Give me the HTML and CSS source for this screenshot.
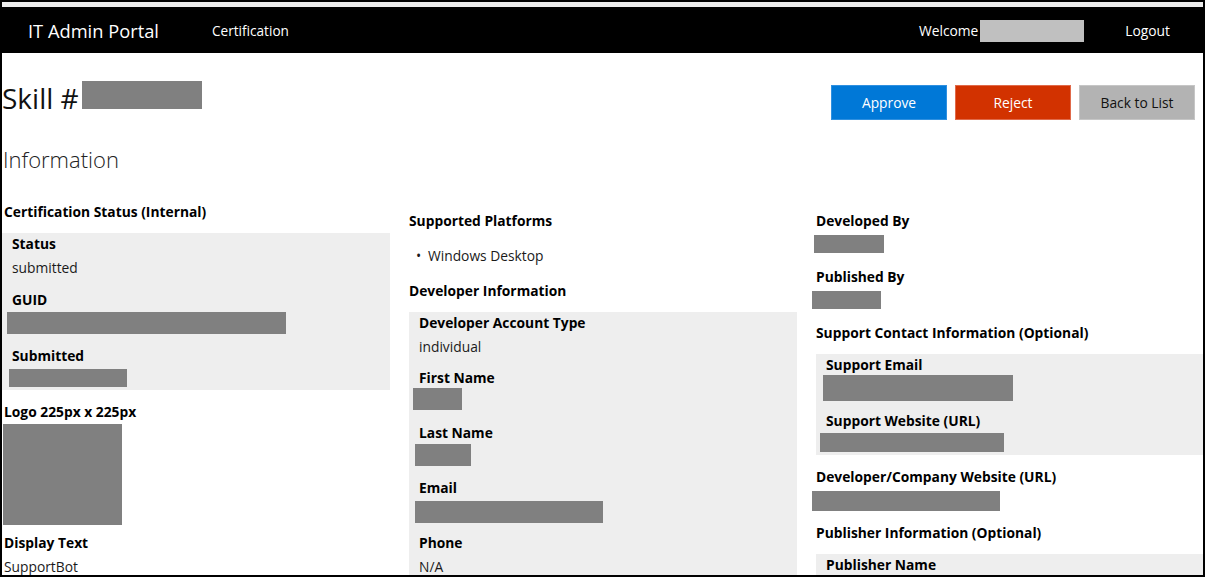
FILE: index.html
```html
<!DOCTYPE html>
<html lang="en">
<head>
<meta charset="utf-8">
<title>IT Admin Portal - Skill</title>
<link rel="stylesheet" href="styles.css">
</head>
<body>
<div class="frame">
  <div class="topstrip"></div>
  <nav class="navbar">
    <a class="brand">IT Admin Portal</a>
    <a class="navlink">Certification</a>
    <div class="navright">
      <span class="welcome">Welcome</span>
      <span class="userbox"></span>
      <a class="logout">Logout</a>
    </div>
  </nav>
  <main class="content">
    <div class="titlerow">
      <h1 class="title">Skill # <span class="redact r-title"></span></h1>
      <div class="actions">
        <button class="btn btn-approve">Approve</button>
        <button class="btn btn-reject">Reject</button>
        <button class="btn btn-back">Back to List</button>
      </div>
    </div>
    <h2 class="section-title">Information</h2>
    <div class="cols">
      <div class="col col-first">
        <div class="heading">Certification Status (Internal)</div>
        <div class="panel">
          <div class="field"><div class="label">Status</div><div class="value">submitted</div></div>
          <div class="field"><div class="label">GUID</div><div class="value"><span class="redact r-guid"></span></div></div>
          <div class="field"><div class="label">Submitted</div><div class="value"><span class="redact r-submitted"></span></div></div>
        </div>
        <div class="field">
          <div class="label">Logo 225px x 225px</div>
          <div class="logo"></div>
        </div>
        <div class="field field-tight"><div class="label">Display Text</div><div class="value">SupportBot</div></div>
      </div>
      <div class="col">
        <div class="heading">Supported Platforms</div>
        <ul class="platforms"><li>Windows Desktop</li></ul>
        <div class="heading heading-loose">Developer Information</div>
        <div class="panel panel-dense">
          <div class="field"><div class="label">Developer Account Type</div><div class="value">individual</div></div>
          <div class="field"><div class="label">First Name</div><div class="value"><span class="redact r-first"></span></div></div>
          <div class="field"><div class="label">Last Name</div><div class="value"><span class="redact r-last"></span></div></div>
          <div class="field"><div class="label">Email</div><div class="value"><span class="redact r-email"></span></div></div>
          <div class="field"><div class="label">Phone</div><div class="value">N/A</div></div>
        </div>
      </div>
      <div class="col">
        <div class="field"><div class="label">Developed By</div><div class="value"><span class="redact r-dev"></span></div></div>
        <div class="field"><div class="label">Published By</div><div class="value"><span class="redact r-pub"></span></div></div>
        <div class="heading">Support Contact Information (Optional)</div>
        <div class="panel">
          <div class="field"><div class="label">Support Email</div><div class="value"><span class="redact r-semail"></span></div></div>
          <div class="field"><div class="label">Support Website (URL)</div><div class="value"><span class="redact r-sweb"></span></div></div>
        </div>
        <div class="field"><div class="label">Developer/Company Website (URL)</div><div class="value"><span class="redact r-cweb"></span></div></div>
        <div class="heading">Publisher Information (Optional)</div>
        <div class="panel">
          <div class="field"><div class="label">Publisher Name</div><div class="value"></div></div>
        </div>
      </div>
    </div>
  </main>
</div>
</body>
</html>
```

FILE: styles.css
```css
* { box-sizing: border-box; }
html, body { margin: 0; padding: 0; background: #fff; }
body {
  font-family: "Open Sans", "Noto Sans", sans-serif;
  font-size: 13.8px;
  color: #1a1a1a;
}
.frame {
  width: 1205px;
  height: 577px;
  border: 2px solid #000;
  overflow: hidden;
  background: #fff;
}
.topstrip { height: 5px; background: #ececec; }
.navbar {
  height: 46px;
  background: #000;
  display: flex;
  align-items: center;
  padding-left: 26px;
  padding-right: 33px;
  padding-top: 1px;
  color: #fff;
}
.brand { width: 184px; font-size: 18.3px; color: #fff; }
.navlink { font-size: 13.6px; color: #fff; }
.navright { margin-left: auto; display: flex; align-items: center; }
.welcome { font-size: 13.8px; }
.userbox { width: 104px; height: 22px; background: #c0c0c0; margin-left: 2px; }
.logout { margin-left: 41px; font-size: 13.8px; color: #fff; }

.content { padding-right: 8px; }
.titlerow { display: flex; justify-content: space-between; align-items: flex-start; }
.title {
  margin: 25px 0 0;
  font-size: 28px;
  font-weight: 400;
  line-height: 40px;
  color: #111;
}
.redact { display: inline-block; background: #808080; }
.r-title { width: 120px; height: 28px; vertical-align: baseline; margin-left: -4px; }
.actions { display: flex; gap: 8px; margin-top: 32px; }
.btn {
  width: 116px;
  height: 35px;
  font-family: inherit;
  font-size: 13.8px;
  border: 1px solid transparent;
  padding: 0;
}
.btn-approve { background: #0078d7; color: #fff; border-color: #2f90e0; }
.btn-reject { background: #d23200; color: #fff; border-color: #e06a4a; }
.btn-back { background: #b3b3b3; color: #111; border-color: #c6c6c6; }

.section-title {
  margin: 23px 0 0;
  font-size: 22px;
  font-weight: 300;
  line-height: 32px;
  color: #222;
  padding-left: 1px;
}
.cols {
  margin-top: 27px;
  display: grid;
  grid-template-columns: 388px 388px 388px;
  column-gap: 19px;
}
.col { padding-top: 9px; }
.col-first { padding-top: 0; }
.col > * + * { margin-top: 12px; }
.col > .heading + .panel { margin-top: 11px; }
.col-first > .heading, .col-first > .field { padding-left: 2px; }
.field { display: flow-root; }
.heading, .label { font-weight: 700; line-height: 20px; color: #000; }
.value { display: flow-root; height: 24px; padding-top: 3px; line-height: 21px; }
.value:has(.redact) { padding-top: 0; }
.panel { display: flow-root; background: #eeeeee; padding: 1px 10px 0; }
.panel .field + .field { margin-top: 12px; }
.panel-dense .field + .field { margin-top: 11px; }
.col > .heading-loose { margin-top: 15px; }
.platforms { list-style: none; margin: 15px 0 0; padding: 0 0 0 7px; line-height: 20px; }
.col > .platforms { margin-top: 15px; }
.platforms li::before { content: "\2022"; display: inline-block; width: 12px; }
.logo { width: 119px; height: 101px; background: #808080; margin-top: 2px; margin-left: -1px; }
.col > .field-tight { margin-top: 8px; }

.redact.r-guid, .redact.r-submitted, .redact.r-first, .redact.r-last, .redact.r-email,
.redact.r-dev, .redact.r-pub, .redact.r-semail, .redact.r-sweb, .redact.r-cweb { display: block; }
.r-guid { width: 279px; height: 22px; margin: 2px 0 0 -5px; }
.r-submitted { width: 118px; height: 18px; margin: 3px 0 0 -3px; }
.r-first { width: 49px; height: 22px; margin: 0 0 0 -6px; }
.r-last { width: 56px; height: 22px; margin: 1px 0 0 -4px; }
.r-email { width: 188px; height: 22px; margin: 3px 0 0 -4px; }
.r-dev { width: 70px; height: 18px; margin: 4px 0 0 -2px; }
.r-pub { width: 69px; height: 18px; margin: 4px 0 0 -4px; }
.r-semail { width: 190px; height: 26px; margin: 0 0 0 -3px; }
.r-sweb { width: 184px; height: 19px; margin: 2px 0 0 -6px; }
.r-cweb { width: 188px; height: 20px; margin: 4px 0 0 -4px; }
```
